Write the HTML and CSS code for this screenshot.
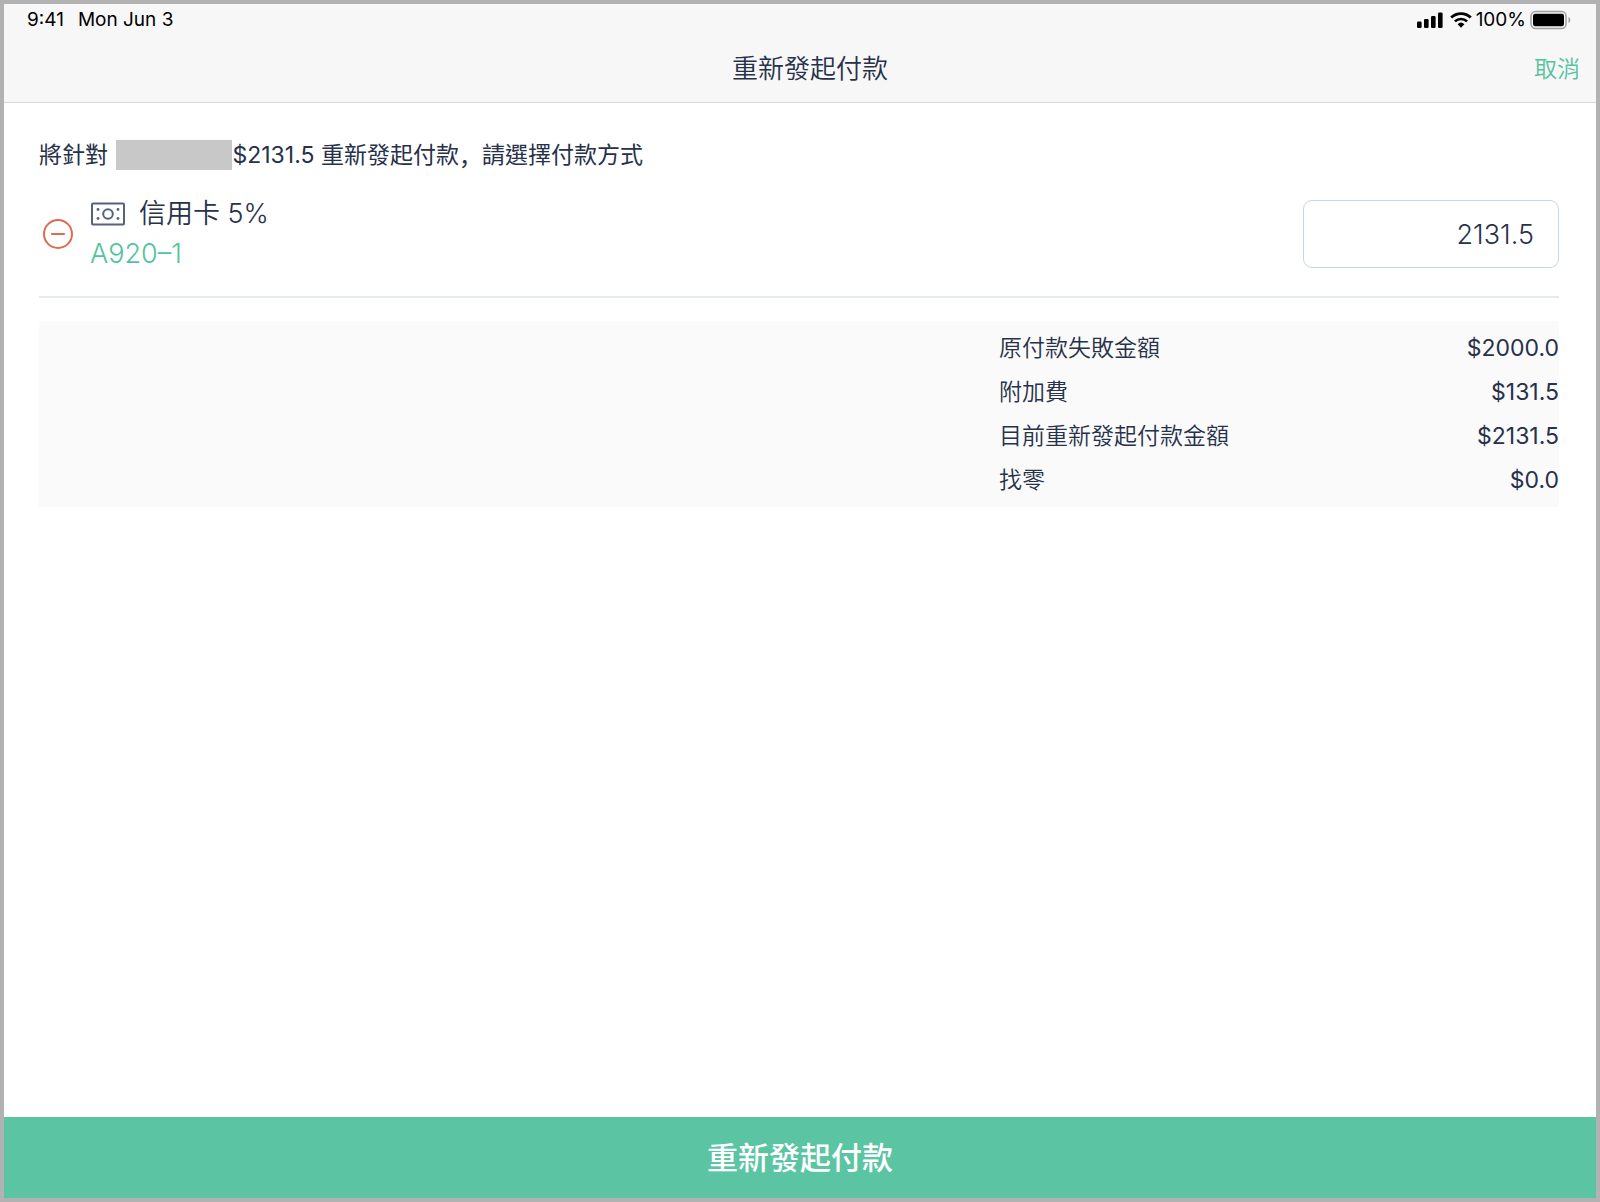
FILE: index.html
```html
<!DOCTYPE html>
<html lang="zh-Hant">
<head>
    <meta charset="UTF-8">
    <meta name="viewport" content="width=device-width, initial-scale=1">
    <title>重新發起付款</title>
    <link rel="stylesheet" href="styles.css">
</head>
<body>
    <header class="header">
        <div class="status-bar">
            <div class="status-left">
                <span>9:41</span>
                <span>Mon Jun 3</span>
            </div>
            <div class="status-right">
                <svg class="signal" width="26" height="16" viewBox="0 0 26 16">
                    <rect x="0" y="9.5" width="4.6" height="6.5" rx="1.2"/>
                    <rect x="7" y="7" width="4.6" height="9" rx="1.2"/>
                    <rect x="14" y="4" width="4.6" height="12" rx="1.2"/>
                    <rect x="21" y="0.5" width="4.6" height="15.5" rx="1.2"/>
                </svg>
                <svg class="wifi" width="22" height="16" viewBox="0 0 22 16">
                    <path d="M1.2 5.6a14 14 0 0 1 19.6 0" fill="none" stroke="#000" stroke-width="2.8"/>
                    <path d="M4.9 9.4a8.8 8.8 0 0 1 12.2 0" fill="none" stroke="#000" stroke-width="2.6"/>
                    <path d="M7.6 12.2a5 5 0 0 1 6.8 0L11 15.8z"/>
                </svg>
                <span>100%</span>
                <svg class="battery" width="42" height="20" viewBox="0 0 42 20">
                    <rect x="1" y="1.5" width="35" height="17" rx="4.5" fill="none" stroke="#a0a0a0" stroke-width="1.5"/>
                    <rect x="3" y="3.7" width="31" height="12.6" rx="2.2"/>
                    <path d="M38.5 7v6c2.4-1 2.4-5 0-6z" fill="#a0a0a0"/>
                </svg>
            </div>
        </div>
        <div class="nav-bar">
            <h1 class="nav-title">重新發起付款</h1>
            <button type="button" class="cancel">取消</button>
        </div>
    </header>

    <main class="content">
        <p class="intro">將針對 <span class="masked"></span>$2131.5 重新發起付款<span class="comma">，</span>請選擇付款方式</p>

        <div class="payment">
            <button type="button" class="remove" aria-label="移除">
                <svg width="32" height="32" viewBox="0 0 32 32" fill="none" stroke="#dd6b50" stroke-width="2">
                    <circle cx="16" cy="16" r="14"/>
                    <path d="M10 16h12" stroke-width="2.2" stroke-linecap="round"/>
                </svg>
            </button>
            <div class="method">
                <label class="method-name" for="amount">
                    <svg width="36" height="24" viewBox="0 0 36 24" fill="none" stroke="#55617f" stroke-width="2">
                        <rect x="2" y="1.5" width="32" height="21" rx="1"/>
                        <circle cx="18" cy="12" r="4.8"/>
                        <g fill="#55617f" stroke="none">
                            <circle cx="8" cy="7.5" r="1.4"/>
                            <circle cx="28" cy="7.5" r="1.4"/>
                            <circle cx="8" cy="16.5" r="1.4"/>
                            <circle cx="28" cy="16.5" r="1.4"/>
                        </g>
                    </svg>
                    信用卡 5%
                </label>
                <div class="terminal">A920–1</div>
            </div>
            <input type="text" id="amount" class="amount" value="2131.5" inputmode="decimal">
        </div>

        <div class="summary">
            <dl class="totals">
                <div class="total-row"><dt>原付款失敗金額</dt><dd>$2000.0</dd></div>
                <div class="total-row"><dt>附加費</dt><dd>$131.5</dd></div>
                <div class="total-row"><dt>目前重新發起付款金額</dt><dd>$2131.5</dd></div>
                <div class="total-row"><dt>找零</dt><dd>$0.0</dd></div>
            </dl>
        </div>
    </main>

    <button type="button" class="submit">重新發起付款</button>
</body>
</html>
```

FILE: styles.css
```css
* {
    box-sizing: border-box;
}

body {
    display: flex;
    flex-direction: column;
    min-height: 100vh;
    margin: 0;
    border: 4px solid #b2b2b2;
    background-color: #fff;
    color: #27314a;
    font-family: Inter, "Noto Sans CJK TC", sans-serif;
    font-size: 23px;
}

button, input {
    font-family: inherit;
    color: inherit;
}

button {
    padding: 0;
    border: none;
    background: none;
    cursor: pointer;
}

svg {
    display: block;
    flex: none;
}

/* Header */
.header {
    height: 99px;
    background-color: #f7f7f7;
    border-bottom: 1px solid #d3dce5;
}

.status-bar {
    display: flex;
    justify-content: space-between;
    padding: 4px 24px 0 23px;
    color: #000;
    font-size: 19px;
    line-height: 24px;
}

.status-left {
    display: flex;
    gap: 14px;
}

.status-right {
    display: flex;
    align-items: center;
    gap: 4px;
}

.wifi {
    margin-left: 3px;
}

.nav-bar {
    display: grid;
    grid-template-columns: 1fr auto 1fr;
    align-items: center;
    padding: 17px 16px 0 36px;
    line-height: 40px;
}

.nav-title {
    grid-column: 2;
    margin: 0;
    font-size: 26px;
    font-weight: 350;
}

.cancel {
    justify-self: end;
    padding-bottom: 4px;
    color: #56c3a0;
    font-size: 23px;
    font-weight: 350;
}

/* Content */
.content {
    flex: 1;
    padding: 32px 37px 32px 35px;
}

.intro {
    display: flex;
    align-items: center;
    margin: 0;
    line-height: 40px;
    white-space: pre;
}

.masked {
    width: 116px;
    height: 30px;
    margin-left: 2px;
    background-color: #c8c8c8;
}

/* comma sits at the lower left of its box */
.comma {
    font-family: "Noto Sans CJK SC", sans-serif;
}

.payment {
    display: flex;
    align-items: center;
    padding: 19px 0 22px;
    border-bottom: 2px solid #e6ebf0;
}

.remove {
    margin: 0 16px 0 3px;
}

.method {
    flex: 1;
    font-size: 27px;
    font-weight: 350;
    line-height: 40px;
}

.method-name {
    display: flex;
    align-items: center;
    gap: 13px;
}

.terminal {
    color: #4fc49c;
}

.amount {
    width: 256px;
    height: 68px;
    padding: 0 24px;
    border: 1px solid #c8d6e4;
    border-radius: 9px;
    background-color: #fff;
    font-size: 27px;
    font-weight: 350;
    text-align: right;
}

/* Totals */
.summary {
    display: flex;
    justify-content: flex-end;
    margin-top: 23px;
    padding: 5px 0;
    background-color: #fafafa;
}

.totals {
    width: 560px;
    margin: 0;
    line-height: 44px;
}

.total-row {
    display: flex;
    justify-content: space-between;
}

.total-row dt {
    font-weight: 350;
}

.total-row dd {
    margin: 0;
}

.submit {
    height: 81px;
    padding-bottom: 4px;
    background-color: #5bc4a2;
    box-shadow: -2px 0 #2f8a6b;
    color: #fff;
    font-size: 31px;
    font-weight: 500;
}
```
